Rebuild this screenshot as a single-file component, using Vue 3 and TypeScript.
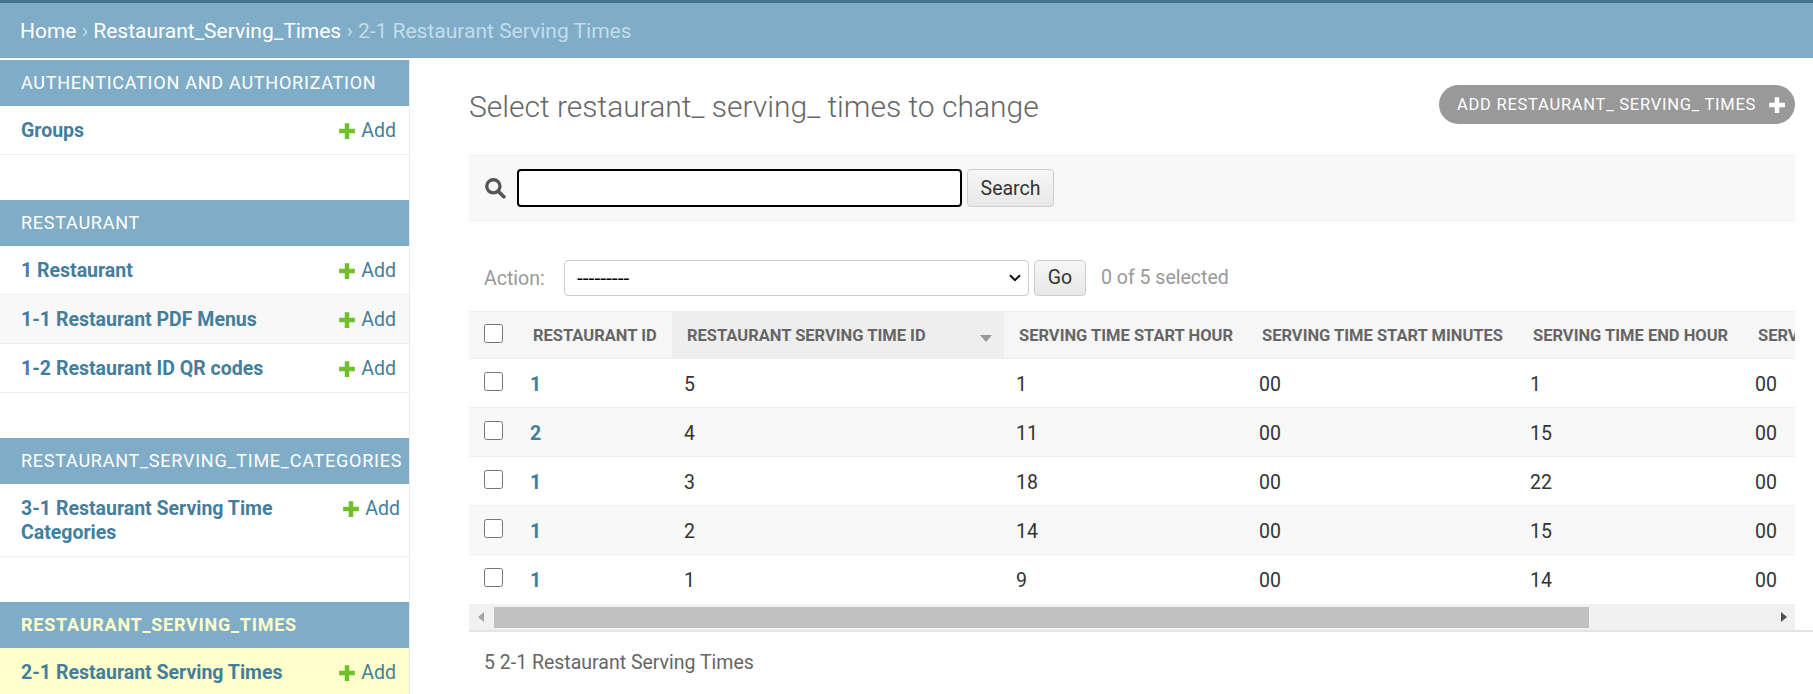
<script setup lang="ts">
interface Row { rid: number; sid: number; sh: number; eh: number }
const rows: Row[] = [
  { rid: 1, sid: 5, sh: 1, eh: 1 },
  { rid: 2, sid: 4, sh: 11, eh: 15 },
  { rid: 1, sid: 3, sh: 18, eh: 22 },
  { rid: 1, sid: 2, sh: 14, eh: 15 },
  { rid: 1, sid: 1, sh: 9, eh: 14 }
]
const restaurantLinks = ['1 Restaurant', '1-1 Restaurant PDF Menus', '1-2 Restaurant ID QR codes']
</script>

<template>
  <div class="page">
    <div class="crumbs">
      <a>Home</a><span class="sep"> › </span><a>Restaurant_Serving_Times</a><span class="sep"> › </span><span class="cur">2-1 Restaurant Serving Times</span>
    </div>
    <div class="body">
      <nav class="side">
        <section class="module">
          <h2 class="cap">Authentication and Authorization</h2>
          <div class="mrow"><a class="mlink">Groups</a><a class="add"><svg class="plus" viewBox="0 0 16 16"><path d="M6 1h4v5h5v4h-5v5H6v-5H1V6h5z" /></svg>Add</a></div>
        </section>
        <section class="module">
          <h2 class="cap">Restaurant</h2>
          <div v-for="(l, i) in restaurantLinks" :key="l" class="mrow" :class="{ alt: i === 1 }"><a class="mlink">{{ l }}</a><a class="add"><svg class="plus" viewBox="0 0 16 16"><path d="M6 1h4v5h5v4h-5v5H6v-5H1V6h5z" /></svg>Add</a></div>
        </section>
        <section class="module">
          <h2 class="cap">Restaurant_Serving_Time_Categories</h2>
          <div class="mrow wide"><a class="mlink">3-1 Restaurant Serving Time Categories</a><a class="add"><svg class="plus" viewBox="0 0 16 16"><path d="M6 1h4v5h5v4h-5v5H6v-5H1V6h5z" /></svg>Add</a></div>
        </section>
        <section class="module current">
          <h2 class="cap">Restaurant_Serving_Times</h2>
          <div class="mrow"><a class="mlink">2-1 Restaurant Serving Times</a><a class="add"><svg class="plus" viewBox="0 0 16 16"><path d="M6 1h4v5h5v4h-5v5H6v-5H1V6h5z" /></svg>Add</a></div>
        </section>
      </nav>

      <main class="main">
        <div class="titlebar">
          <h1>Select restaurant_ serving_ times to change</h1>
          <a class="addbtn">Add restaurant_ serving_ times<svg class="wplus" viewBox="0 0 16 16"><path d="M6 1h4v5h5v4h-5v5H6v-5H1V6h5z" /></svg></a>
        </div>

        <div class="search">
          <svg class="glass" viewBox="0 0 20 20"><circle cx="8.5" cy="8.5" r="6" fill="none" stroke="#555" stroke-width="3" /><path d="M13 13l5 5" stroke="#555" stroke-width="3.4" stroke-linecap="round" /></svg>
          <input class="sinput" type="text" />
          <button class="btn sbtn">Search</button>
        </div>

        <div class="actions">
          <span class="alabel">Action:</span>
          <div class="selwrap">
            <select class="sel"><option>---------</option></select>
            <svg class="chev" viewBox="0 0 12 8"><path d="M1 1.2l5 5 5-5" fill="none" stroke="#111" stroke-width="2" /></svg>
          </div>
          <button class="btn gobtn">Go</button>
          <span class="count">0 of 5 selected</span>
        </div>

        <div class="tablewrap">
          <table class="grid">
            <colgroup>
              <col class="c1" /><col class="c2" /><col class="c3" /><col class="c4" /><col class="c5" /><col class="c6" /><col class="c7" />
            </colgroup>
            <thead>
              <tr>
                <th class="chk"><input type="checkbox" /></th>
                <th>Restaurant ID</th>
                <th class="sorted">Restaurant serving time ID<i class="tri"></i></th>
                <th>Serving time start hour</th>
                <th>Serving time start minutes</th>
                <th>Serving time end hour</th>
                <th>Serving time end minutes</th>
              </tr>
            </thead>
            <tbody>
              <tr v-for="(r, i) in rows" :key="r.sid" :class="{ odd: i % 2 === 1 }">
                <td class="chk"><input type="checkbox" /></td>
                <td><a class="idlink">{{ r.rid }}</a></td>
                <td>{{ r.sid }}</td>
                <td>{{ r.sh }}</td>
                <td>00</td>
                <td>{{ r.eh }}</td>
                <td>00</td>
              </tr>
            </tbody>
          </table>
        </div>

        <div class="scrollbar">
          <span class="arrow left"></span>
          <div class="thumb"></div>
          <span class="arrow right"></span>
        </div>

        <div class="paginator">5 2-1 Restaurant Serving Times</div>
      </main>
    </div>
  </div>
</template>

<style>
html, body { margin: 0; background: #fff; overflow: hidden; }
</style>

<style scoped>
.page {
  height: 694px;
  overflow: hidden;
  font-family: Roboto, "Liberation Sans", sans-serif;
  color: #333;
  background: #fff;
}
.crumbs {
  height: 55px;
  border-top: 3px solid #417690;
  background: #7fadc8;
  padding-left: 20px;
  display: flex;
  align-items: center;
  white-space: pre;
  font-size: 21px;
  color: #c4dce8;
}
.crumbs a { color: #fff; }
.body { display: flex; padding-top: 2px; }
.side { width: 409px; flex: none; border-right: 1px solid #eaeaea; height: 640px; }
.module { margin-bottom: 45px; }
.cap {
  margin: 0;
  height: 46px;
  box-sizing: border-box;
  padding: 0 0 2px 21px;
  background: #7fadc8;
  color: #fff;
  font-size: 18px;
  font-weight: 400;
  letter-spacing: 0.75px;
  text-transform: uppercase;
  display: flex;
  align-items: center;
}
.current .cap { color: #ffc; font-weight: 700; }
.current .mrow { background: #ffc; }
.mrow {
  display: flex;
  justify-content: space-between;
  align-items: flex-start;
  padding: 13px 13px 11px 21px;
  border-bottom: 1px solid #eee;
  font-size: 19.5px;
  line-height: 24px;
  min-height: 24px;
}
.mrow.alt { background: #f8f8f8; }
.mrow.wide { padding-right: 9px; }
.mlink { color: #447e9b; font-weight: 700; }
.wide .mlink { max-width: 280px; }
.add { color: #447e9b; display: flex; align-items: center; white-space: nowrap; flex: none; }
.plus { width: 18px; height: 18px; fill: #70bf2b; margin-right: 5px; margin-left: -1px; }
.main { flex: 1; min-width: 0; padding: 0 0 0 59px; }
.titlebar {
  display: flex;
  justify-content: space-between;
  width: 1326px;
  height: 95px;
  align-items: flex-start;
}
h1 { margin: 0; padding-top: 27px; font-size: 30px; font-weight: 300; color: #666; line-height: 40px; }
.addbtn {
  margin-top: 25px;
  height: 39px;
  width: 356px;
  box-sizing: border-box;
  border-radius: 20px;
  background: #999;
  color: #fff;
  text-transform: uppercase;
  font-size: 16.5px;
  letter-spacing: 0.75px;
  display: flex;
  align-items: center;
  padding-left: 18px;
  white-space: nowrap;
}
.wplus { width: 18px; height: 18px; fill: #fff; margin-left: 12px; }
.search {
  width: 1326px;
  height: 66px;
  box-sizing: border-box;
  background: #f8f8f8;
  border-top: 1px solid #eee;
  border-bottom: 1px solid #eee;
  display: flex;
  align-items: center;
}
.glass { width: 22px; height: 22px; margin-left: 15px; margin-right: 11px; }
.sinput {
  width: 445px;
  height: 38px;
  box-sizing: border-box;
  border: 2px solid #000;
  border-radius: 4px;
  background: #fff;
  outline: none;
}
.btn {
  font-family: inherit;
  font-size: 19.5px;
  color: #333;
  border: 1px solid #ccc;
  border-radius: 4px;
  background: linear-gradient(#f6f6f6, #e8e8e8);
  padding: 0;
  height: 38px;
}
.sbtn { width: 87px; margin-left: 5px; }
.actions {
  width: 1326px;
  height: 90px;
  box-sizing: border-box;
  padding: 39px 0 0 15px;
  display: flex;
  align-items: flex-start;
  font-size: 19.5px;
}
.alabel { color: #999; width: 80px; line-height: 38px; }
.selwrap { position: relative; width: 465px; height: 36px; }
.sel {
  appearance: none;
  display: block;
  width: 100%;
  height: 36px;
  box-sizing: border-box;
  border: 1px solid #ccc;
  border-radius: 4px;
  background-color: #fff;
  font-family: inherit;
  font-size: 21px;
  color: #000;
  padding: 0 0 0 12px;
  outline: none;
}
.chev { position: absolute; right: 8px; top: 14px; width: 12px; height: 8px; pointer-events: none; }
.gobtn { width: 52px; height: 36px; margin-left: 5px; padding-bottom: 2px; }
.count { margin-left: 15px; color: #999; line-height: 36px; }
.tablewrap { width: 1326px; overflow: hidden; }
.grid { border-collapse: separate; border-spacing: 0; table-layout: fixed; width: 1574px; }
.c1 { width: 49px; }
.c2 { width: 154px; }
.c3 { width: 332px; }
.c4 { width: 243px; }
.c5 { width: 271px; }
.c6 { width: 225px; }
.c7 { width: 300px; }
th {
  height: 48px;
  box-sizing: border-box;
  background: #f6f6f6;
  border-top: 1px solid #eee;
  border-bottom: 1px solid #eee;
  text-transform: uppercase;
  text-align: left;
  color: #666;
  font-size: 16.5px;
  font-weight: 700;
  padding: 0 0 0 15px;
  white-space: nowrap;
  position: relative;
}
th.sorted { background: #eee; }
.tri {
  position: absolute;
  right: 12px;
  top: 23px;
  border-left: 6px solid transparent;
  border-right: 6px solid transparent;
  border-top: 7px solid #999;
}
td {
  height: 49px;
  box-sizing: border-box;
  border-bottom: 1px solid #eee;
  font-size: 19.5px;
  color: #333;
  padding: 2px 0 0 12px;
}
tr.odd td { background: #f8f8f8; }
tbody tr:last-child td { border-bottom: none; }
td.chk, th.chk { padding: 0 0 4px 15px; }
.chk input { width: 19px; height: 19px; margin: 0; display: block; }
.idlink { color: #447e9b; font-weight: 700; }
.scrollbar {
  width: 1326px;
  height: 26px;
  box-sizing: border-box;
  background: #f1f1f1;
  display: flex;
  align-items: center;
  position: relative;
  padding-left: 25px;
}
.thumb { width: 1095px; height: 21px; background: #c1c1c1; }
.arrow { position: absolute; top: 8px; border-top: 5px solid transparent; border-bottom: 5px solid transparent; }
.arrow.left { left: 9px; border-right: 6px solid #a3a3a3; }
.arrow.right { right: 8px; border-left: 6px solid #505050; }
.paginator {
  border-top: 2px solid #e4e4e4;
  color: #666;
  font-size: 19.5px;
  padding: 19px 0 0 15px;
  line-height: 24px;
}
</style>
